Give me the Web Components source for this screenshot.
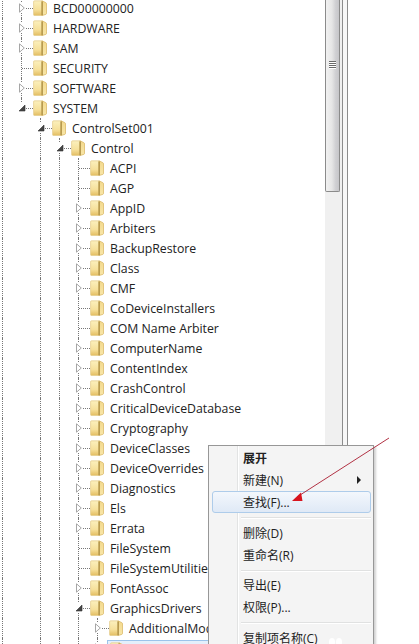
<!DOCTYPE html>
<html>
<head>
<meta charset="utf-8">
<title>regedit</title>
<style>
html, body { margin: 0; height: 644px; overflow: hidden; background: #fff; }
body { display: flex; position: relative; font: 12px "Open Sans", "Noto Sans CJK SC", sans-serif; color: #222; }
</style>
</head>
<body>
<reg-tree>
<reg-row level="0" state="closed" guides="0 1" label="BCD00000000"></reg-row>
<reg-row level="0" state="closed" guides="0 1" label="HARDWARE"></reg-row>
<reg-row level="0" state="closed" guides="0 1" label="SAM"></reg-row>
<reg-row level="0" state="leaf" guides="0 1" label="SECURITY"></reg-row>
<reg-row level="0" state="closed" guides="0 1" label="SOFTWARE"></reg-row>
<reg-row level="0" state="open" guides="0" label="SYSTEM"></reg-row>
<reg-row level="1" state="open" guides="0 2" label="ControlSet001"></reg-row>
<reg-row level="2" state="open" guides="0 2 3" label="Control"></reg-row>
<reg-row level="3" state="leaf" guides="0 2 3 4" label="ACPI"></reg-row>
<reg-row level="3" state="leaf" guides="0 2 3 4" label="AGP"></reg-row>
<reg-row level="3" state="closed" guides="0 2 3 4" label="AppID"></reg-row>
<reg-row level="3" state="closed" guides="0 2 3 4" label="Arbiters"></reg-row>
<reg-row level="3" state="closed" guides="0 2 3 4" label="BackupRestore"></reg-row>
<reg-row level="3" state="closed" guides="0 2 3 4" label="Class"></reg-row>
<reg-row level="3" state="closed" guides="0 2 3 4" label="CMF"></reg-row>
<reg-row level="3" state="leaf" guides="0 2 3 4" label="CoDeviceInstallers"></reg-row>
<reg-row level="3" state="leaf" guides="0 2 3 4" label="COM Name Arbiter"></reg-row>
<reg-row level="3" state="closed" guides="0 2 3 4" label="ComputerName"></reg-row>
<reg-row level="3" state="closed" guides="0 2 3 4" label="ContentIndex"></reg-row>
<reg-row level="3" state="closed" guides="0 2 3 4" label="CrashControl"></reg-row>
<reg-row level="3" state="closed" guides="0 2 3 4" label="CriticalDeviceDatabase"></reg-row>
<reg-row level="3" state="closed" guides="0 2 3 4" label="Cryptography"></reg-row>
<reg-row level="3" state="closed" guides="0 2 3 4" label="DeviceClasses"></reg-row>
<reg-row level="3" state="closed" guides="0 2 3 4" label="DeviceOverrides"></reg-row>
<reg-row level="3" state="closed" guides="0 2 3 4" label="Diagnostics"></reg-row>
<reg-row level="3" state="closed" guides="0 2 3 4" label="Els"></reg-row>
<reg-row level="3" state="closed" guides="0 2 3 4" label="Errata"></reg-row>
<reg-row level="3" state="leaf" guides="0 2 3 4" label="FileSystem"></reg-row>
<reg-row level="3" state="leaf" guides="0 2 3 4" label="FileSystemUtilities"></reg-row>
<reg-row level="3" state="closed" guides="0 2 3 4" label="FontAssoc"></reg-row>
<reg-row level="3" state="open" guides="0 2 3 4" label="GraphicsDrivers"></reg-row>
<reg-row level="4" state="closed" guides="0 2 3 4 5" label="AdditionalModeLists"></reg-row>
<reg-row level="4" state="closed" guides="0 2 3 4 5" label="Configuration" selected></reg-row>
</reg-tree>
<reg-scrollbar></reg-scrollbar>
<reg-splitter></reg-splitter>

<ctx-menu>
<menu-item bold>展开</menu-item>
<menu-item submenu>新建(N)</menu-item>
<menu-item active>查找(F)...</menu-item>
<menu-sep></menu-sep>
<menu-item>删除(D)</menu-item>
<menu-item>重命名(R)</menu-item>
<menu-sep></menu-sep>
<menu-item>导出(E)</menu-item>
<menu-item>权限(P)...</menu-item>
<menu-sep></menu-sep>
<menu-item>复制项名称(C)</menu-item>
</ctx-menu>
<red-arrow></red-arrow>

<script>
customElements.define('reg-tree', class extends HTMLElement {
    constructor() {
        super()
        this.attachShadow({ mode: 'open' }).innerHTML = `
        <style>
            :host { display: block; flex: 0 0 325px; width: 325px; height: 644px; overflow: hidden; }
            .rows { margin-top: -2px; }
        </style>
        <div class="rows"><slot></slot></div>`
    }
})

const FOLDER = `<svg width="14" height="16" viewBox="0 0 13 15">
    <defs>
        <linearGradient id="left" x1="0" y1="0" x2="0" y2="1">
            <stop offset="0" stop-color="#fbf0bd"/><stop offset=".6" stop-color="#f6e09a"/><stop offset="1" stop-color="#e3bd62"/>
        </linearGradient>
        <linearGradient id="right" x1="0" y1="0" x2="0" y2="1">
            <stop offset="0" stop-color="#f3d98c"/><stop offset="1" stop-color="#f8e6a8"/>
        </linearGradient>
    </defs>
    <path d="M.5 1.500Q.5 .8 1.200 .8H8.500V14.500H1.200Q.5 14.500 .5 13.800z" fill="url(#left)" stroke="#e4cc8c" stroke-width=".7"/>
    <path d="M8.500 .8L12 2.500Q12.600 2.800 12.600 3.500V12.500Q12.600 13.200 12 13.500L8.500 14.500z" fill="url(#right)" stroke="#d9b763" stroke-width=".7"/>
    <path d="M8.500 1.500V14.200" stroke="#a5873c" stroke-width="1.100"/>
</svg>`

const CLOSED = `<svg width="6" height="10" viewBox="0 0 6 10"><path d="M.5.8L5.3 5 .5 9.2z" fill="#fff" stroke="#a6a6a6"/></svg>`
const OPEN = `<svg width="8" height="8" viewBox="0 0 8 8"><path d="M7 1v6H1z" fill="#444" stroke="#333" stroke-width=".6"/></svg>`

customElements.define('reg-row', class extends HTMLElement {
    constructor() {
        super()
        this.attachShadow({ mode: 'open' })
    }
    connectedCallback() {
        let level = +this.getAttribute('level')
        let state = this.getAttribute('state')
        let guides = (this.getAttribute('guides') || '').split(' ').map(Number)
        let cells = ''
        for (let i = 0; i <= level + 1; i++) {
            let own = i == level + 1
            let cls = 'cell'
            if (guides.includes(i)) cls += ' line'
            else if (own) cls += ' half'
            if (own) cls += ' own'
            let mark = own && state == 'closed' ? CLOSED : own && state == 'open' ? OPEN : ''
            cells += `<div class="${cls}">${mark ? `<span class="twisty">${mark}</span>` : ''}</div>`
        }
        this.shadowRoot.innerHTML = `
        <style>
            :host { display: flex; height: 20px; margin-left: -7px; }
            .cell { flex: 0 0 19px; position: relative; height: 20px; }
            .line::before, .half::before {
                content: ""; position: absolute; left: 9px; top: 0; bottom: 0;
                border-left: 1px dotted #777;
            }
            .half::before { bottom: 10px; }
            .own::after {
                content: ""; position: absolute; left: 10px; right: -2px; top: 10px;
                border-top: 1px dotted #777;
            }
            .twisty {
                position: absolute; z-index: 1; left: 5px; top: 5px; width: 9px; height: 10px;
                display: flex; align-items: center; justify-content: center; background: #fff;
            }
            .item { display: flex; align-items: center; gap: 6px; margin-left: 2px; height: 20px; white-space: nowrap; }
            .item svg { flex: none; }
            :host([selected]) .item {
                margin-left: 0; padding: 0 20px 0 2px; height: 18px; margin-top: 2px; box-sizing: border-box;
                background: #e4effb; border: 1px solid #9cc3ea; border-bottom: 0;
            }
            .label { font-size: 12.3px; color: #222; }
        </style>
        ${cells}
        <div class="item">${FOLDER}<span class="label">${this.getAttribute('label')}</span></div>`
    }
})

customElements.define('reg-scrollbar', class extends HTMLElement {
    constructor() {
        super()
        this.attachShadow({ mode: 'open' }).innerHTML = `
        <style>
            :host { display: block; flex: 0 0 17px; width: 17px; height: 445px; background: #f0f0f0; }
            .thumb {
                box-sizing: border-box; width: 15px; height: 192px;
                border: 1px solid #8b8b8b; border-top: 0; border-radius: 0 0 2px 2px;
                background: linear-gradient(90deg, #f1f1f1 0, #e6e6e6 45%, #cfcfd2 75%, #c6c6c9 100%);
                display: flex; flex-direction: column; align-items: center; justify-content: flex-start; gap: 1px;
                padding-top: 61px;
            }
            .thumb i { display: block; width: 7px; height: 1px; background: #6a6a6a; box-shadow: 0 1px 0 #fff; }
        </style>
        <div class="thumb"><i></i><i></i><i></i><i></i></div>`
    }
})

customElements.define('reg-splitter', class extends HTMLElement {
    constructor() {
        super()
        this.attachShadow({ mode: 'open' }).innerHTML = `
        <style>
            :host {
                display: block; box-sizing: border-box; flex: 0 0 6px; width: 6px; height: 445px;
                border-left: 1px solid #8c8c8c; border-right: 1px solid #8c8c8c; background: #f7f7f7;
            }
        </style>`
    }
})

customElements.define('ctx-menu', class extends HTMLElement {
    constructor() {
        super()
        this.attachShadow({ mode: 'open' }).innerHTML = `
        <style>
            :host {
                display: block; position: absolute; left: 208px; top: 445px; width: 166px; height: 210px;
                box-sizing: border-box; border: 1px solid #979797; background: #f4f4f4;
                box-shadow: 2px 2px 2px rgba(0,0,0,.18);
                padding: 1px 2px 0 3px; color: #222;
                font: 12px "Open Sans", "Noto Sans CJK SC", sans-serif;
            }
            .gutter {
                position: absolute; left: 28px; top: 0; bottom: 0; width: 1px;
                background: #e2e3e3; border-right: 1px solid #fff;
            }
            .items { position: relative; }
            .mark { position: absolute; left: 120px; top: 192px; width: 6px; height: 8px; border-radius: 50%; background: #fff; box-shadow: 7px 0 0 #fff; }
        </style>
        <div class="gutter"></div>
        <div class="items"><slot></slot></div>
        <div class="mark"></div>`
    }
})

customElements.define('menu-item', class extends HTMLElement {
    constructor() {
        super()
        this.attachShadow({ mode: 'open' }).innerHTML = `
        <style>
            :host {
                display: flex; align-items: center; justify-content: space-between; box-sizing: border-box;
                height: 22px; padding: 0 9px 0 30px; white-space: nowrap;
                border: 1px solid transparent; border-radius: 3px;
            }
            :host([bold]) { font-weight: 700; }
            :host([active]) {
                border-color: #aeccea;
                background: linear-gradient(#f3f7fc, #dfe9f6);
            }
            .arrow { display: none; width: 0; height: 0; border-left: 4px solid #222; border-top: 4px solid transparent; border-bottom: 4px solid transparent; }
            :host([submenu]) .arrow { display: block; }
        </style>
        <span><slot></slot></span><span class="arrow"></span>`
    }
})

customElements.define('menu-sep', class extends HTMLElement {
    constructor() {
        super()
        this.attachShadow({ mode: 'open' }).innerHTML = `
        <style>
            :host { display: block; height: 1px; margin: 4px 0 3.5px 29px; background: #e0e1e1; box-shadow: 0 1px 0 #fff; }
        </style>`
    }
})

customElements.define('red-arrow', class extends HTMLElement {
    constructor() {
        super()
        this.attachShadow({ mode: 'open' }).innerHTML = `
        <style>
            :host { display: block; position: absolute; left: 280px; top: 430px; width: 120px; height: 80px; }
        </style>
        <svg width="120" height="80" viewBox="0 0 120 80">
            <path d="M109 8L17 67" stroke="#b23244" stroke-width="1" fill="none"/>
            <path d="M12 71L21 62.500L22.500 71z" fill="#d8141e"/>
        </svg>`
    }
})
</script>
</body>
</html>
